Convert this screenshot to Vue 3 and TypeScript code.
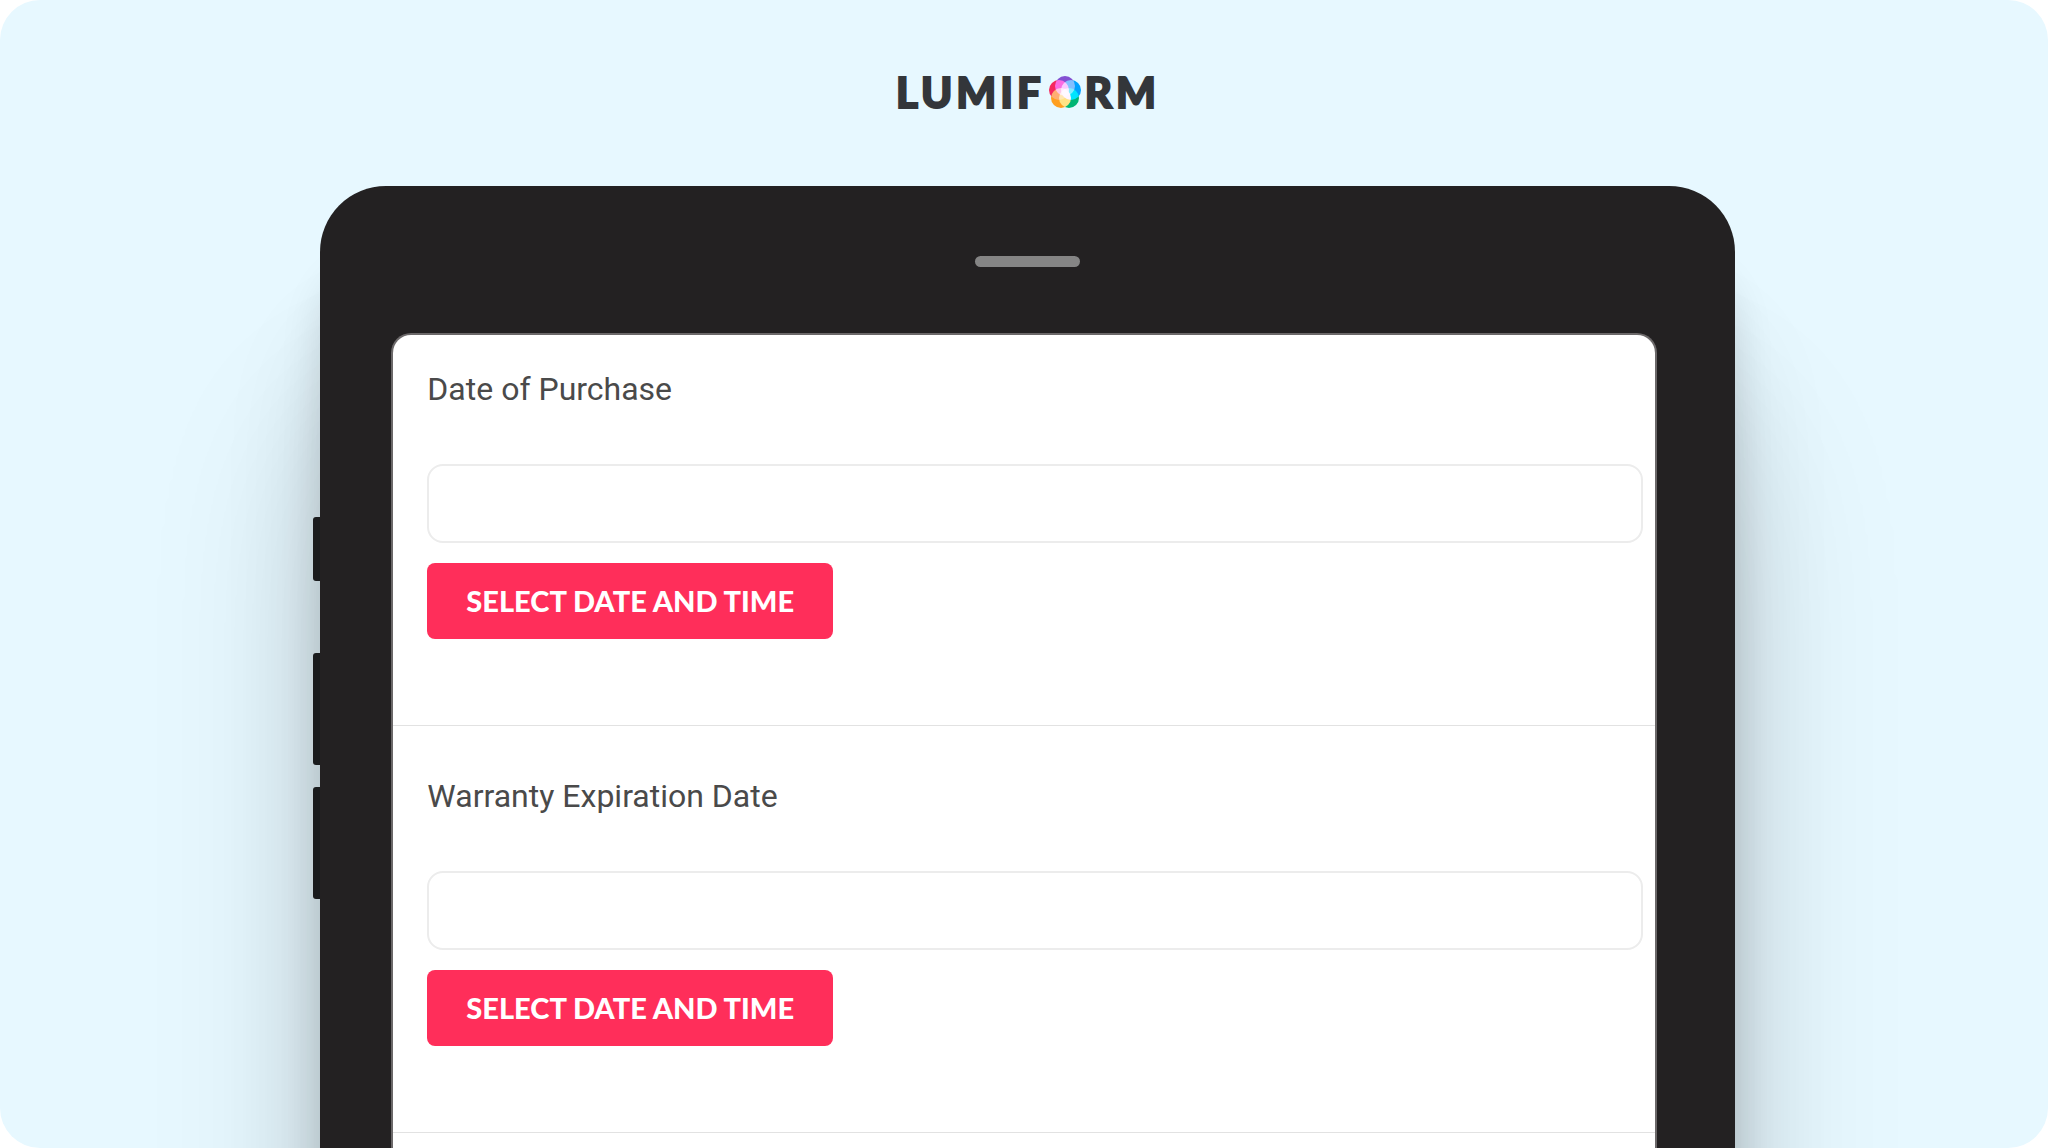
<script setup lang="ts">
interface Question {
  id: string
  label: string
}

const questions: Question[] = [
  { id: 'purchase-date', label: 'Date of Purchase' },
  { id: 'warranty-date', label: 'Warranty Expiration Date' },
]

const petals = [
  { cx: 16, cy: 10, fill: '#8350d2' },
  { cx: 22, cy: 14, fill: '#00a2ff' },
  { cx: 20, cy: 22, fill: '#00b574' },
  { cx: 12, cy: 22, fill: '#ff9f1f' },
  { cx: 10, cy: 14, fill: '#f5285f' },
]
</script>

<template>
  <main class="stage">
    <header class="brand">
      <span>LUMIF</span>
      <svg class="flower" viewBox="0 0 32 32" role="img" aria-label="O">
        <circle v-for="p in petals" :key="p.fill" :cx="p.cx" :cy="p.cy" r="10" :fill="p.fill" />
      </svg>
      <span>RM</span>
    </header>

    <div class="device">
      <div class="keys">
        <i class="key short"></i>
        <i class="key"></i>
        <i class="key"></i>
      </div>
      <div class="body">
        <div class="speaker"></div>
        <form class="screen" @submit.prevent>
          <section v-for="q in questions" :key="q.id" class="question">
            <label :for="q.id">{{ q.label }}</label>
            <input :id="q.id" type="text" />
            <button type="button">SELECT DATE AND TIME</button>
          </section>
        </form>
      </div>
    </div>
  </main>
</template>

<style>
body {
  background: #fff;
}
</style>

<style scoped>
.stage {
  box-sizing: border-box;
  display: flex;
  flex-direction: column;
  min-height: 100vh;
  overflow: hidden;
  border-radius: 40px;
  background: #e7f8ff;
}

.brand {
  display: flex;
  justify-content: center;
  align-items: center;
  gap: 4px;
  padding: 67px 0 69px 8px;
  color: #33363a;
  font: 900 42px/50px Lato, sans-serif;
  letter-spacing: 4px;
  -webkit-text-stroke: 2px #33363a;
}

.flower {
  width: 32px;
  height: 32px;
  isolation: isolate;
}

.flower circle {
  mix-blend-mode: screen;
}

.device {
  display: flex;
  flex: 1;
  width: 69.4%;
  margin: 0 auto;
}

.keys {
  display: flex;
  flex-direction: column;
  gap: 22px;
  width: 7px;
  padding-top: 331px;
}

.key {
  height: 112px;
  border-radius: 3px 0 0 3px;
  background: #202224;
}

.key.short {
  height: 64px;
  margin-bottom: 50px;
}

.body {
  box-sizing: border-box;
  display: flex;
  flex: 1;
  flex-direction: column;
  padding: 70px 71px 0;
  border-radius: 66px 66px 0 0;
  background: #232122;
  box-shadow:
    0 80px 40px rgba(0, 0, 0, 0.12),
    0 150px 100px rgba(0, 0, 0, 0.12),
    0 240px 180px rgba(0, 0, 0, 0.14);
}

.speaker {
  align-self: center;
  width: 105px;
  height: 11px;
  margin-bottom: 66px;
  border-radius: 6px;
  background: #858585;
}

.screen {
  flex: 1;
  margin-right: 7px;
  border: 2px solid #6b6869;
  border-bottom: 0;
  border-radius: 20px 20px 0 0;
  background: #fff;
}

.question {
  display: flex;
  flex-direction: column;
  align-items: flex-start;
  padding: 50px 12px 86px 34px;
  border-bottom: 1px solid #e2e2e2;
}

.question:first-child {
  padding-top: 34px;
}

label {
  margin-bottom: 55px;
  color: #4a4a4a;
  font: 400 32px/40px Roboto, sans-serif;
}

input {
  box-sizing: border-box;
  width: 100%;
  height: 79px;
  margin-bottom: 20px;
  padding: 0 20px;
  border: 2px solid #ececec;
  border-radius: 16px;
  background: #fff;
  color: #4a4a4a;
  font: 400 32px/40px Roboto, sans-serif;
}

button {
  padding: 20px 39px;
  border: 0;
  border-radius: 8px;
  background: #ff2e5a;
  color: #fff;
  font: 900 29px/36px Lato, sans-serif;
}
</style>
